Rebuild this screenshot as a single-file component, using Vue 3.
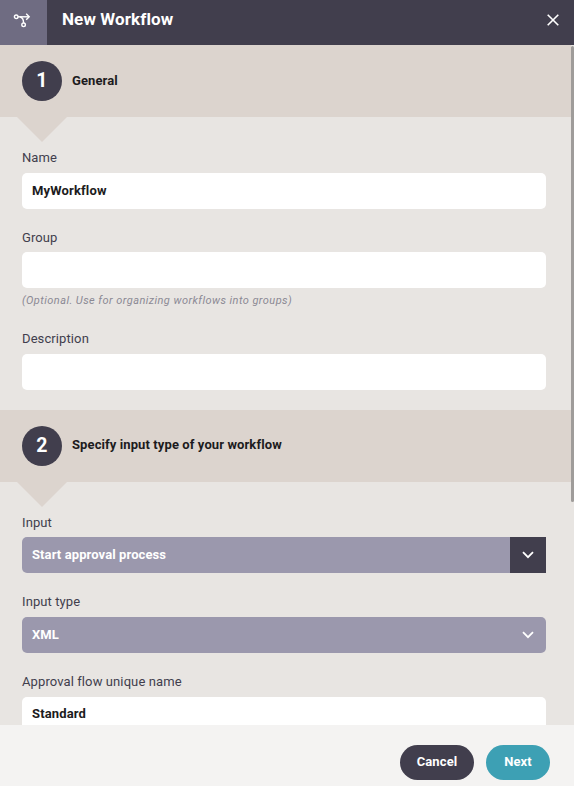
<script setup>
import { ref } from 'vue'

const name = ref('MyWorkflow')
const group = ref('')
const description = ref('')
const input = ref('Start approval process')
const inputType = ref('XML')
const flowName = ref('Standard')
</script>

<template>
  <div class="dialog">
    <header class="dialog-header">
      <div class="header-icon">
        <svg width="18" height="16" viewBox="0 0 18 16" fill="none" stroke="#fff" stroke-width="1.4">
          <circle cx="3.2" cy="4.8" r="1.8" />
          <circle cx="10.6" cy="12.8" r="1.8" />
          <path d="M5 4.8H16" />
          <path d="M13.2 1.8L16.2 4.8L13.2 7.8" />
          <path d="M6.8 4.8Q10.6 5.8 10.6 11" />
        </svg>
      </div>
      <h1>New Workflow</h1>
      <button class="btn-close" aria-label="Close">
        <svg width="12" height="12" viewBox="0 0 12 12" fill="none" stroke="#fff" stroke-width="1.6">
          <path d="M0.7 0.7L11.3 11.3M11.3 0.7L0.7 11.3" />
        </svg>
      </button>
    </header>

    <main class="dialog-body">
      <div class="steps">
        <div class="step-header">
          <span class="step-number">1</span>
          <h2>General</h2>
        </div>
        <section class="step-body">
          <div class="field">
            <label for="name">Name</label>
            <input id="name" v-model="name" type="text">
          </div>
          <div class="field">
            <label for="group">Group</label>
            <input id="group" v-model="group" type="text">
            <p class="hint">(Optional. Use for organizing workflows into groups)</p>
          </div>
          <div class="field">
            <label for="description">Description</label>
            <input id="description" v-model="description" type="text">
          </div>
        </section>

        <div class="step-header">
          <span class="step-number">2</span>
          <h2>Specify input type of your workflow</h2>
        </div>
        <section class="step-body">
          <div class="field">
            <label>Input</label>
            <div class="select split">
              <span class="value">{{ input }}</span>
              <span class="toggle">
                <svg width="12" height="8" viewBox="0 0 12 8" fill="none" stroke="#fff" stroke-width="1.8">
                  <path d="M1 1.2L6 6.2L11 1.2" />
                </svg>
              </span>
            </div>
          </div>
          <div class="field">
            <label>Input type</label>
            <div class="select">
              <span class="value">{{ inputType }}</span>
              <span class="toggle">
                <svg width="12" height="8" viewBox="0 0 12 8" fill="none" stroke="#fff" stroke-width="1.8">
                  <path d="M1 1.2L6 6.2L11 1.2" />
                </svg>
              </span>
            </div>
          </div>
          <div class="field">
            <label for="flow">Approval flow unique name</label>
            <input id="flow" v-model="flowName" type="text">
          </div>
        </section>
      </div>
      <div class="scrollbar"><div class="thumb"></div></div>
    </main>

    <footer class="dialog-footer">
      <button class="btn btn-cancel">Cancel</button>
      <button class="btn btn-next">Next</button>
    </footer>
  </div>
</template>

<style>
body { margin: 0; overflow: hidden; }
</style>

<style scoped>
.dialog {
  height: 100vh; display: flex; flex-direction: column; overflow: hidden;
  font-family: Roboto, sans-serif; font-size: 13px; letter-spacing: 0.1px; color: #413e4d; background: #e8e5e2;
}
h1, h2, p { margin: 0; }
button { border: none; padding: 0; cursor: pointer; font-family: inherit; letter-spacing: inherit; }
svg { display: block; }

.dialog-header { flex: none; height: 45px; display: flex; background: #413e4d; color: #fff; }
.header-icon {
  width: 47px; box-sizing: border-box; padding: 12px 0 0 13px; background: #6f6c82;
}
h1 { flex: 1; padding-left: 15px; font-size: 17px; line-height: 38px; font-weight: 700; }
.btn-close { width: 42px; height: 40px; padding-left: 15px; background: none; }

.dialog-body { flex: 1; min-height: 0; display: flex; }
.steps { flex: 1; min-width: 0; overflow: hidden; }
.step-header {
  position: relative; height: 72px; box-sizing: border-box; padding: 0 22px;
  display: flex; align-items: center; gap: 10px; background: #dcd4ce;
}
/* arrow pointing from the step header into its fields */
.step-header::after {
  content: ''; position: absolute; left: 17px; top: 100%;
  border: solid transparent; border-width: 25px 25px 0; border-top-color: #dcd4ce;
}
.step-number {
  width: 40px; height: 40px; border-radius: 50%; background: #413e4d; color: #fff;
  font-size: 19.5px; font-weight: 700; line-height: 39px; text-align: center;
}
h2 { font-size: 13px; font-weight: 700; line-height: 20px; color: #1c1b20; padding-bottom: 1px; }

.step-body { padding: 31.93px 25px 19.8px 22px; display: flex; flex-direction: column; gap: 20px; }
.field { display: flex; flex-direction: column; }
label { height: 23.67px; line-height: 17px; }
input {
  height: 36px; box-sizing: border-box; border: none; outline: none; border-radius: 5px; padding: 0 10px 1.1px;
  background: #fff; color: #1c1b20; font: 700 13px Roboto, sans-serif; letter-spacing: 0.15px;
}
.hint {
  height: 21.96px; line-height: 25px; font-size: 11px; font-style: italic; letter-spacing: 0.44px; color: #8b8994;
}
.select {
  height: 36px; display: flex; border-radius: 5px; overflow: hidden;
  background: #9b98ad; color: #fff; font-weight: 700; line-height: 35px;
}
.select.split { border-radius: 5px 0 0 5px; }
.value { flex: 1; padding-left: 10px; }
.toggle { width: 36px; display: flex; align-items: center; justify-content: center; }
.split .toggle { background: #413e4d; }

.scrollbar { width: 3px; padding-top: 1px; }
.thumb { height: 456px; background: #9f9c9a; border-radius: 2px; }

.dialog-footer {
  flex: none; height: 61px; box-sizing: border-box; padding: 20px 24px 0; background: #f4f3f2;
  display: flex; justify-content: flex-end; align-items: flex-start; gap: 12px;
}
.btn { height: 35px; border-radius: 18px; padding-bottom: 2px; color: #fff; font-size: 13px; font-weight: 700; }
.btn-cancel { width: 74px; background: #413e4d; }
.btn-next { width: 64px; background: #3da0b4; }
</style>
